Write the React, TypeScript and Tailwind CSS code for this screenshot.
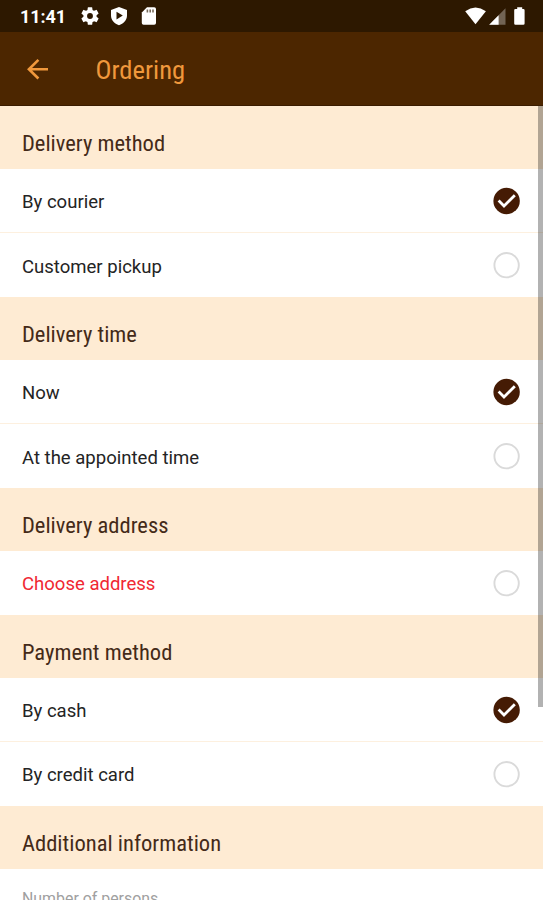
import React from "react";

type Item = { label: string; checked?: boolean; alert?: boolean };
type Section = { title: string; items: Item[] };

const sections: Section[] = [
  { title: "Delivery method", items: [{ label: "By courier", checked: true }, { label: "Customer pickup" }] },
  { title: "Delivery time", items: [{ label: "Now", checked: true }, { label: "At the appointed time" }] },
  { title: "Delivery address", items: [{ label: "Choose address", alert: true }] },
  { title: "Payment method", items: [{ label: "By cash", checked: true }, { label: "By credit card" }] },
  { title: "Additional information", items: [] },
];

function Mark({ checked }: { checked?: boolean }) {
  return (
    <svg width="28" height="28" viewBox="0 0 28 28" fill="none" className="shrink-0">
      {checked ? (
        <>
          <circle cx="13.6" cy="14" r="13.2" fill="#451b04" />
          <path d="M5.6 13.6 L11 19 L21.8 8.3" stroke="#fff" strokeWidth="2.8" />
        </>
      ) : (
        <circle cx="13.6" cy="14.2" r="12.2" stroke="#dadada" strokeWidth="1.9" />
      )}
    </svg>
  );
}

function StatusBar() {
  return (
    <div className="flex h-8 shrink-0 items-center bg-[#2d1800] pl-5 text-white">
      <span className="w-[59px] pt-[2px] text-[18px] font-bold leading-8 tracking-[-0.1px]">11:41</span>
      <svg width="22" height="22" viewBox="0 0 24 24" fill="currentColor">
        <path d="M19.14 12.94c.04-.3.06-.61.06-.94s-.02-.64-.07-.94l2.03-1.58a.49.49 0 0 0 .12-.61l-1.92-3.32a.49.49 0 0 0-.59-.22l-2.39.96c-.5-.38-1.03-.7-1.62-.94L14.4 2.81a.48.48 0 0 0-.48-.41h-3.84a.47.47 0 0 0-.47.41l-.36 2.54c-.59.24-1.13.57-1.62.94l-2.39-.96a.48.48 0 0 0-.59.22L2.74 8.87a.48.48 0 0 0 .12.61l2.03 1.58c-.05.3-.09.63-.09.94s.02.64.07.94l-2.03 1.58a.49.49 0 0 0-.12.61l1.92 3.32c.12.22.37.29.59.22l2.39-.96c.5.38 1.03.7 1.62.94l.36 2.54c.05.24.24.41.48.41h3.84c.24 0 .44-.17.47-.41l.36-2.54c.59-.24 1.13-.56 1.62-.94l2.39.96c.22.08.47 0 .59-.22l1.92-3.32a.48.48 0 0 0-.12-.61zM12 15.2a3.2 3.2 0 1 1 0-6.4 3.2 3.2 0 0 1 0 6.4z" />
      </svg>
      <svg width="18" height="20" viewBox="0 0 18 20" fill="currentColor" className="ml-[9px]">
        <path fillRule="evenodd" d="M9 1 L17 4 V9.5 C17 14 13.5 17.8 9 19.2 C4.5 17.8 1 14 1 9.5 V4Z M6.5 5.7 V13.5 L12.8 9.6Z" />
      </svg>
      <svg width="16" height="20" viewBox="0 0 16 20" fill="currentColor" className="ml-[13px]">
        <path d="M6 1.3 H13.2 Q15 1.3 15 3 V17 Q15 18.8 13.2 18.8 H2.6 Q.8 18.8 .8 17 V6.5Z" />
        <path d="M5.6 3.6 H7.2 V6.4 H5.6Z M8.4 3.6 H10 V6.4 H8.4Z M11.2 3.6 H12.8 V6.4 H11.2Z" fill="#2d1800" opacity=".65" />
      </svg>
      <svg width="62" height="20" viewBox="0 0 62 20" fill="currentColor" className="ml-auto mr-[16px]">
        <path d="M.2 5.2 Q10.5 -2.2 20.9 5.2 L10.5 18.2Z" />
        <path d="M24.2 18.8 L40.5 2.3 V18.8Z" opacity=".33" />
        <path d="M24.2 18.8 L33.6 9.3 V18.8Z" />
        <path d="M52.2 1.3 H57.2 V3 H58.3 Q59.6 3 59.6 4.2 V17.6 Q59.6 18.8 58.3 18.8 H50.4 Q49.2 18.8 49.2 17.6 V4.2 Q49.2 3 50.4 3 H52.2Z" />
      </svg>
    </div>
  );
}

export default function App() {
  return (
    <div className="relative flex h-[900px] w-[543px] flex-col overflow-hidden bg-white font-[Roboto,sans-serif] text-[#242424]">
      <StatusBar />
      <header className="flex h-[74px] shrink-0 items-center border-b border-[#3a1c00] bg-[#4c2600] pl-[26px] text-[#f0983c]">
        <svg width="24" height="24" viewBox="0 0 24 24" fill="none" stroke="currentColor" strokeWidth="2.6">
          <path d="M22 12.2 H3 M12.4 2.9 L2.9 12.2 L12.4 21.5" />
        </svg>
        <h1 className="ml-[45.5px] pt-[2px] font-['Roboto_Condensed',Roboto,sans-serif] text-[26.6px] leading-8 [font-stretch:75%]">Ordering</h1>
      </header>
      <main className="flex flex-col">
        {sections.map((s) => (
          <section key={s.title} className="shrink-0">
            <h2 className="flex h-[63.4px] items-center bg-[#feebd3] pl-[22px] pt-[13px] font-['Roboto_Condensed',Roboto,sans-serif] text-[22.55px] leading-7 text-[#442a18] [font-stretch:75%]">
              {s.title}
            </h2>
            {s.items.map((item, n) => (
              <div
                key={item.label}
                className={`flex items-center justify-between px-[22px] ${n < s.items.length - 1 ? "h-[64px] border-b border-[#fdf0df]" : "h-[63.5px]"}`}
              >
                <span className={`text-[18.55px] leading-6 ${n > 0 ? "pt-[3px]" : "pt-[2px]"} ${item.alert ? "text-[#f02832]" : ""}`}>
                  {item.label}
                </span>
                <Mark checked={item.checked} />
              </div>
            ))}
          </section>
        ))}
        <label className="pl-[22px] pt-[18px] text-[15.9px] leading-6 text-[#a0a0a0]">Number of persons</label>
      </main>
      <div className="absolute right-0 top-[106px] h-[601px] w-[5px] bg-black/30" />
    </div>
  );
}
